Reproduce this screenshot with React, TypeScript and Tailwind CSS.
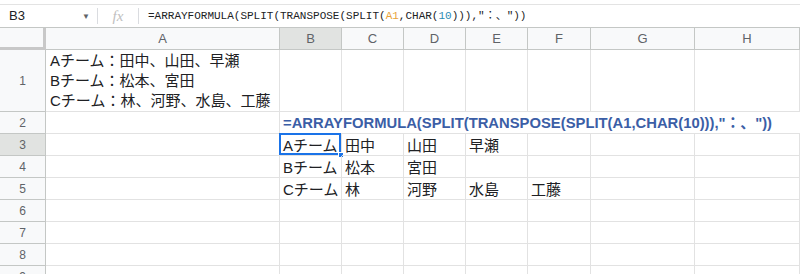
const sans = "font-['Liberation_Sans','Noto_Sans_CJK_JP',sans-serif]";

// column widths after the row header: A..H
const colW = ["w-[234px]", "w-[62px]", "w-[62px]", "w-[62px]", "w-[62px]", "w-[63px]", "w-[104px]", "w-[105px]"];
const letters = ["A", "B", "C", "D", "E", "F", "G", "H"];

const data: Record<number, string[]> = {
  3: ["", "Aチーム", "田中", "山田", "早瀬", "", "", ""],
  4: ["", "Bチーム", "松本", "宮田", "", "", "", ""],
  5: ["", "Cチーム", "林", "河野", "水島", "工藤", "", ""],
};

const RowHead = ({ n, selected, h }: { n: number; selected?: boolean; h: string }) => (
  <div
    className={`w-[46px] shrink-0 ${h} flex items-center justify-center border-r border-b border-[#c4c7c5] text-[12px] text-[#5f6368] ${sans} ${
      selected ? "bg-[#e1e3e1]" : "bg-[#f8f9fa]"
    }`}
  >
    {n}
  </div>
);

const Cell = ({ w, text, selected }: { w: string; text?: string; selected?: boolean }) => (
  <div
    className={`${w} shrink-0 h-full relative flex items-end px-[3px] border-r border-b border-[#e2e2e2] text-[15px] leading-[19px] text-[#202124] whitespace-nowrap ${sans}`}
  >
    {text}
    {selected && (
      <>
        <div className="absolute -left-px -top-px -right-0 -bottom-0 border-2 border-[#1a73e8]" />
        <div className="absolute -right-[3px] -bottom-[3px] w-[6px] h-[6px] bg-[#1a73e8] border border-white" />
      </>
    )}
  </div>
);

const App = () => {
  return (
    <div className="w-[800px] h-[274px] overflow-hidden bg-white">
      {/* Formula bar */}
      <div className="h-[5px] border-b border-[#e3e3e3]" />
      <div className="h-[23px] flex items-center border-b border-[#c4c7c5] text-[#202124]">
        <div className={`w-[82px] pl-[9px] text-[13px] ${sans}`}>B3</div>
        <div className="w-[12px] text-[8px] text-[#5f6368]">▼</div>
        <div className="w-px h-[16px] bg-[#dadce0] ml-[3px]" />
        <div className="w-[40px] flex justify-center text-[15px] italic text-[#c0c0c0] font-['Liberation_Serif',serif]">
          fx
        </div>
        <div className="w-px h-[16px] bg-[#dadce0]" />
        <div className="pl-[9px] text-[11px] font-['Liberation_Mono','Noto_Sans_CJK_JP',monospace] whitespace-nowrap">
          =ARRAYFORMULA(SPLIT(TRANSPOSE(SPLIT(<span className="text-[#e8a33a]">A1</span>,CHAR(
          <span className="text-[#2b8bb3]">10</span>))),"：、"))
        </div>
      </div>

      {/* Column headers */}
      <div className="h-[22px] flex">
        <div className="w-[46px] shrink-0 bg-[#f8f9fa] border-r-[3px] border-b-[3px] border-[#c8c8c8]" />
        {letters.map((l, i) => (
          <div
            key={l}
            className={`${colW[i]} shrink-0 flex items-center justify-center border-r border-b border-[#c4c7c5] text-[13px] text-[#5f6368] ${sans} ${
              l === "B" ? "bg-[#e1e3e1]" : "bg-[#f8f9fa]"
            }`}
          >
            {l}
          </div>
        ))}
      </div>

      {/* Row 1 */}
      <div className="h-[62px] flex">
        <RowHead n={1} h="h-[62px]" />
        <div
          className={`w-[234px] shrink-0 flex flex-col justify-end px-[4px] pb-0 border-r border-b border-[#e2e2e2] text-[15px] leading-[20px] text-[#202124] ${sans}`}
        >
          <div>Aチーム：田中、山田、早瀬</div>
          <div>Bチーム：松本、宮田</div>
          <div>Cチーム：林、河野、水島、工藤</div>
        </div>
        {colW.slice(1).map((w, i) => (
          <Cell key={i} w={w} />
        ))}
      </div>

      {/* Row 2 */}
      <div className="h-[22px] flex">
        <RowHead n={2} h="h-[22px]" />
        <Cell w={colW[0]} />
        <div
          className={`w-[520px] shrink-0 flex items-end px-[3px] border-b border-[#e2e2e2] text-[14.8px] leading-[19px] font-bold text-[#3b5ea6] whitespace-nowrap ${sans}`}
        >
          =ARRAYFORMULA(SPLIT(TRANSPOSE(SPLIT(A1,CHAR(10))),"：、"))
        </div>
      </div>

      {/* Rows 3..9 */}
      {[3, 4, 5, 6, 7, 8, 9].map((r) => (
        <div key={r} className="h-[22px] flex">
          <RowHead n={r} h="h-[22px]" selected={r === 3} />
          {colW.map((w, i) => (
            <Cell key={i} w={w} text={data[r]?.[i]} selected={r === 3 && i === 1} />
          ))}
        </div>
      ))}
    </div>
  );
};

export default App;
